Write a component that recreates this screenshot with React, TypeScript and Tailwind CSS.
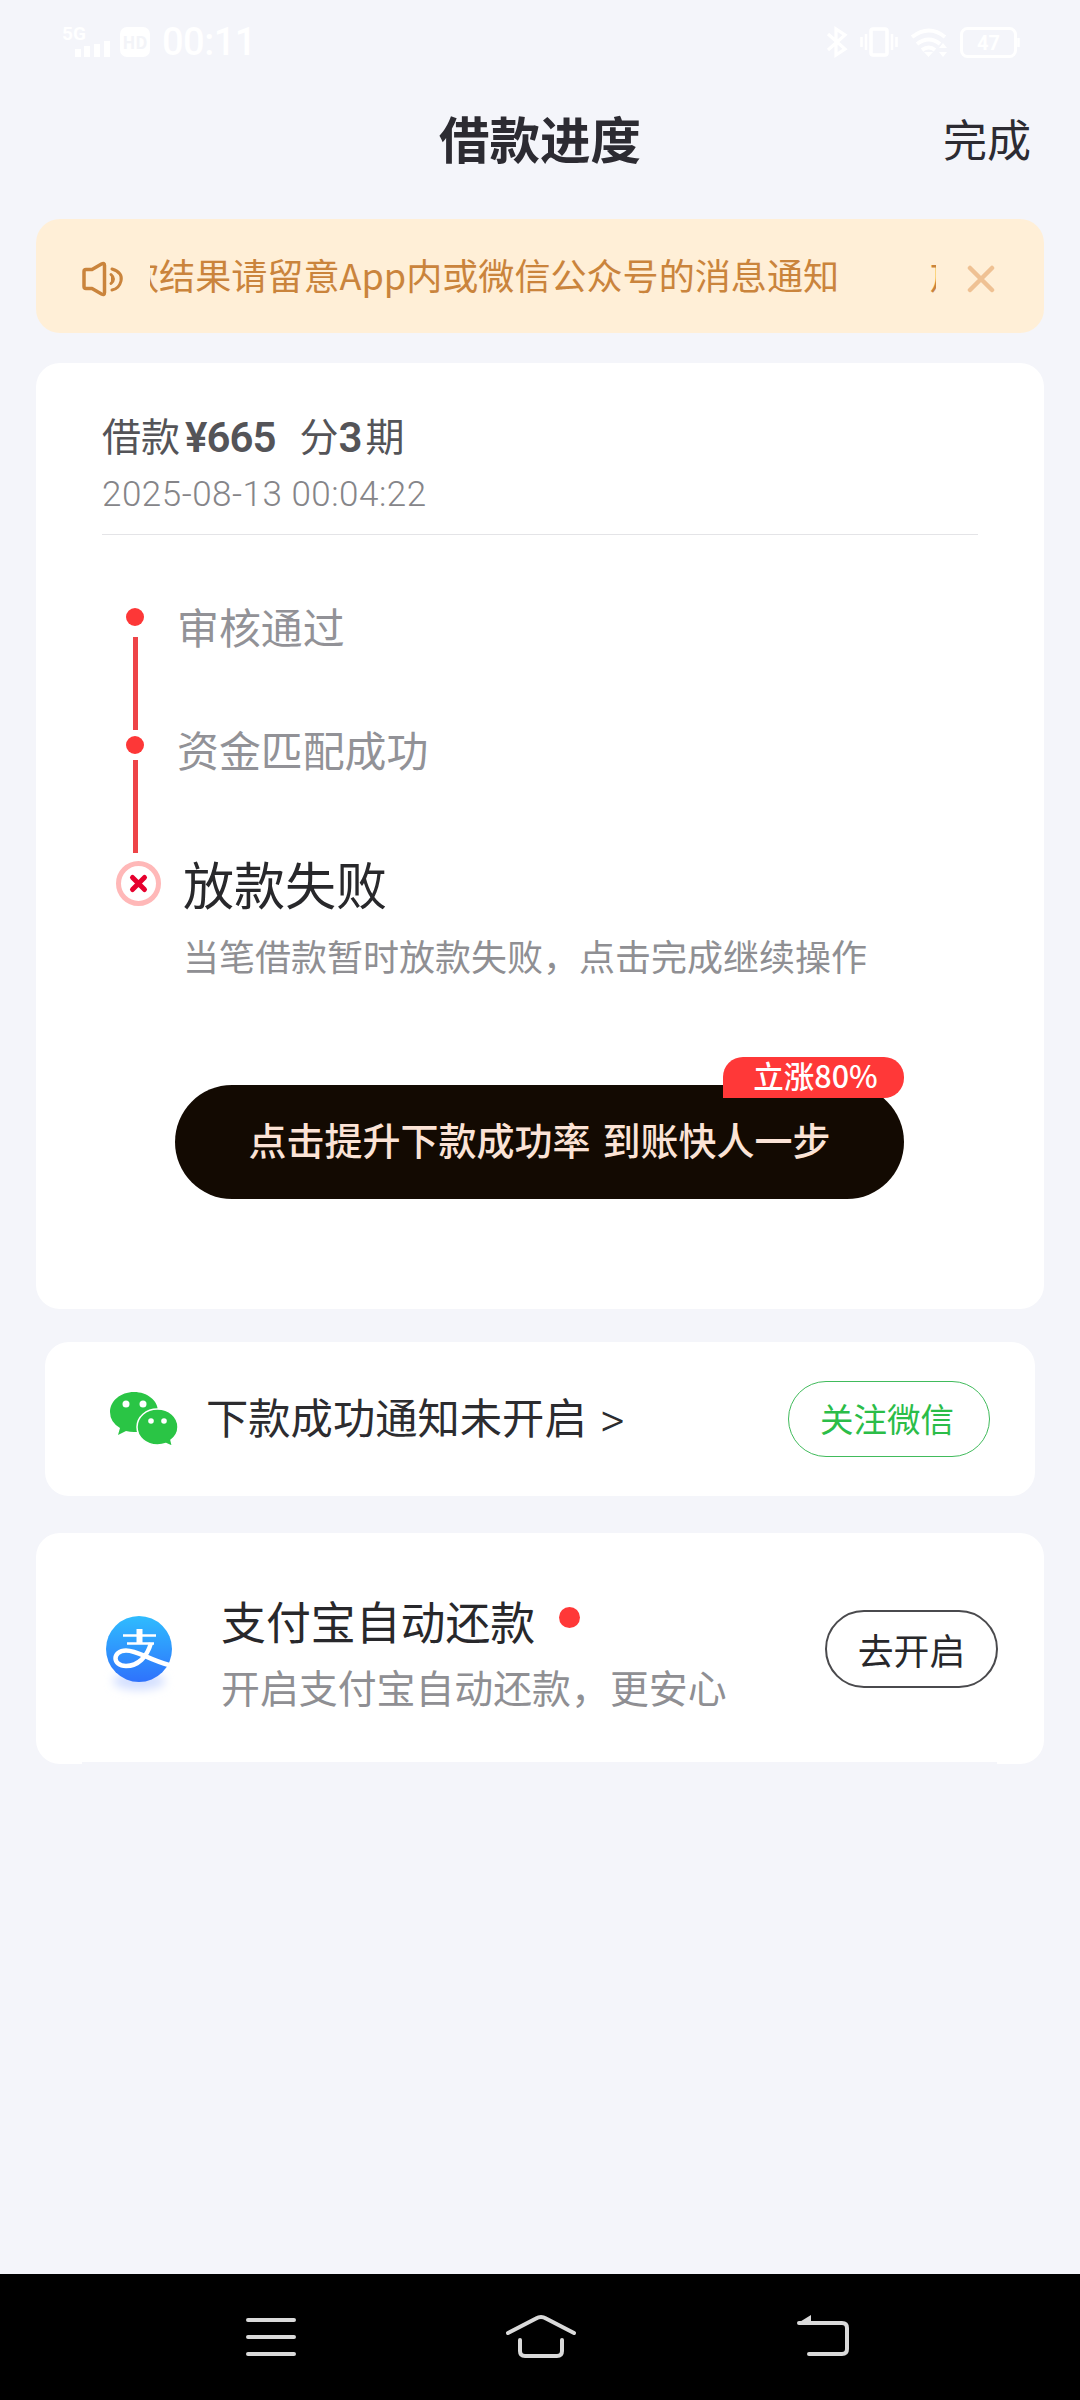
import React from "react";

const steps = [
  { title: "审核通过", dot: "h-[18px] w-[18px] shrink-0 rounded-full bg-[#fd3737] mt-[11px] mb-[11px]" },
  { title: "资金匹配成功", dot: "h-[18px] w-[18px] shrink-0 rounded-full bg-[#fd3737] mt-[16px] mb-[6px]" },
];

const StatusBar = () => (
  <div className="flex h-[84px] items-center justify-between pl-[61px] pr-[60px] text-white">
    <div className="flex items-center">
      <svg width="52" height="36" viewBox="0 0 52 36" fill="currentColor" className="overflow-visible">
        <text x="1" y="16" fontSize="19" fontWeight="700" fontFamily="Roboto">
          5G
        </text>
        <rect x="14" y="25" width="6" height="8" />
        <rect x="23" y="22" width="6" height="11" />
        <rect x="33" y="20" width="6" height="13" />
        <rect x="43" y="17" width="6" height="16" />
      </svg>
      <div className="ml-[7px] flex h-[30px] w-[30px] items-center justify-center rounded-[7px] bg-white text-[17px] font-bold text-[#f3f4f8]">
        HD
      </div>
      <span className="ml-[12px] font-['Roboto'] text-[38px] leading-none font-medium tracking-[-0.5px]">
        00:11
      </span>
    </div>
    <svg width="194" height="32" viewBox="0 0 194 32" fill="none" stroke="currentColor">
      <path d="M2 8l17 15-9 6V3l9 6L2 24" strokeWidth="3.2" />
      <rect x="45" y="3" width="16" height="26" rx="2" strokeWidth="3.5" />
      <path d="M40 8v16M66 8v16M35.500 11v10M70.500 11v10" strokeWidth="2.500" />
      <path d="M86 11q17-13 33 0M91 18q12-9 23 0M96 24q7-5 13 0" strokeWidth="4" />
      <path d="M98 26h9l-4.500 5zM113 22l4-5 4 5zM113 26h8l-4 5z" fill="currentColor" stroke="none" />
      <rect x="135.500" y="2.500" width="54" height="28" rx="6" strokeWidth="3" />
      <path d="M192.500 12v9" strokeWidth="2.500" />
      <text x="151" y="24" fontSize="20" fontWeight="700" fontFamily="Roboto" fill="currentColor" stroke="none">
        47
      </text>
    </svg>
  </div>
);

const Header = () => (
  <div className="grid h-[116px] grid-cols-3 items-center px-[49px] pb-[9px] text-[#2c2b32]">
    <span />
    <h1 className="text-center text-[50.500px] leading-none font-bold">
      借款进度
    </h1>
    <span className="text-right text-[44px] leading-none">完成</span>
  </div>
);

const Notice = () => (
  <div className="mx-9 mt-[19px] flex h-[114px] items-center rounded-3xl bg-[#ffefd7] pl-[45px] text-[#ca843c]">
    <svg width="44" height="36" viewBox="0 0 44 36" className="mt-[5px] shrink-0" fill="none" stroke="currentColor" strokeWidth="3.500" strokeLinecap="round" strokeLinejoin="round">
      <path d="M3 10.500q0-2 2-2h6L20.500 3q3-1.500 3 1.500v27q0 3-3 1.500L11 27.500H5q-2 0-2-2z" />
      <path d="M30 13.500q5 4.500 0 9" fill="currentColor" strokeWidth="3" />
      <path d="M31 8q11 3.500 9 12-2 8-9 9" strokeWidth="3" />
    </svg>
    <div className="ml-[25px] w-[786px] overflow-hidden">
      <div className="-ml-[27px] flex w-max pb-[5px] text-[36.100px] leading-[50px] whitespace-nowrap">
        <span>款结果请留意App内或微信公众号的消息通知</span>
        <span className="ml-[91px]">放款结果</span>
      </div>
    </div>
    <svg width="28" height="28" viewBox="0 0 28 28" className="mt-[6px] ml-[31px]" stroke="#efc193" strokeWidth="4.500" strokeLinecap="round">
      <path d="M3 3l22 22M25 3L3 25" />
    </svg>
  </div>
);

const Progress = () => (
  <div className="mx-9 mt-[30px] h-[946px] rounded-3xl bg-white px-[66px]">
    <div className="flex h-[101px] items-center pt-[40px] text-[39px] leading-[58px] text-[#545458]">
      <span>借款</span>
      <span className="ml-[5px] pt-[9px] font-['Roboto'] text-[42px] font-semibold tracking-[-1px]">
        ¥665
      </span>
      <span className="ml-[24px]">分</span>
      <span className="pt-[9px] font-['Roboto'] text-[42px] font-semibold tracking-[-1px]">
        3
      </span>
      <span className="ml-[4px]">期</span>
    </div>
    <p className="h-[71px] border-b border-[#e4e4e7] pt-[2px] font-['Roboto'] text-[35px] leading-[58px] font-light tracking-[0.500px] text-[#858589]">
      2025-08-13 00:04:22
    </p>

    <div className="mt-[62px]">
      {steps.map((step) => (
        <div key={step.title} className="flex h-[123px]">
          <div className="flex w-[66px] shrink-0 flex-col items-center">
            <span className={step.dot} />
            <span className="h-[93px] w-[5px] shrink-0 bg-[#ee4448]" />
          </div>
          <span className="ml-[9px] text-[41.900px] leading-[58px] text-[#929297]">
            {step.title}
          </span>
        </div>
      ))}
      <div className="flex">
        <svg width="45" height="45" viewBox="0 0 45 45" className="mt-[18px] ml-[14px]" fill="none" strokeLinecap="round">
          <circle cx="22.500" cy="22.500" r="20" stroke="#ffb8b8" strokeWidth="5" />
          <path d="M16.500 16.500l12 12M28.500 16.500l-12 12" stroke="#e6002d" strokeWidth="5" />
        </svg>
        <div className="ml-[22px]">
          <h2 className="text-[51px] leading-[80px] text-[#28282b]">放款失败</h2>
          <p className="pt-[4px] text-[36px] leading-[56px] text-[#8f8f93]">
            当笔借款暂时放款失败，点击完成继续操作
          </p>
        </div>
      </div>
    </div>

    <div className="relative mt-[102px] ml-[73px] flex h-[114px] w-[729px] items-center justify-center rounded-full bg-[#130a02] pb-[7px] text-[38px] font-medium whitespace-pre text-[#fbe3d6]">
      点击提升下款成功率<span className="ml-[12px]">到账快人一步</span>
      <span className="absolute -top-[28px] right-0 flex h-[41px] w-[181px] items-center justify-center rounded-[20px] rounded-bl-none bg-[#ff3838] pb-[3px] pl-[4px] text-[30.500px] font-medium text-white">
        立涨80%
      </span>
    </div>
  </div>
);

const WechatIcon = () => (
  <svg width="68" height="55" viewBox="0 0 68 55" fill="#2ac545">
    <path d="M24 0C37.500 0 48 8.500 48 19.500S37.500 40 24 40q-4 0-8-1l-8 4 2-7Q0 30 0 20C0 9 10.500 0 24 0z" />
    <path d="M47.500 17C59 17 68 24.500 68 35q0 8-7 13l1.500 6.500-6.500-3q-4 1.500-8.500 1.500C36 53 27 45 27 35S36 17 47.500 17z" stroke="#fff" strokeWidth="1.500" />
    <g fill="#fff">
      <circle cx="16" cy="12" r="3.500" />
      <circle cx="33" cy="12" r="3.500" />
      <circle cx="41" cy="29" r="2.800" />
      <circle cx="54" cy="29" r="2.800" />
    </g>
  </svg>
);

const AlipayIcon = () => (
  <svg width="66" height="66" viewBox="0 0 66 66" className="mt-[1px] overflow-visible">
    <defs>
      <linearGradient id="alipay" x1="0" y1="0" x2="0" y2="1">
        <stop offset="0" stopColor="#2fbcfe" />
        <stop offset="1" stopColor="#2f72fc" />
      </linearGradient>
      <filter id="soft" x="-30%" y="-80%" width="160%" height="260%">
        <feGaussianBlur stdDeviation="5" />
      </filter>
    </defs>
    <ellipse cx="33" cy="65" rx="26" ry="9" fill="#d3dfff" filter="url(#soft)" />
    <circle cx="33" cy="33" r="33" fill="url(#alipay)" />
    <g fill="none" stroke="#fff">
      <path d="M17 19.500h33M21 27.500h27" strokeWidth="2.500" />
      <path d="M33.500 13v14" strokeWidth="6" />
      <path d="M45 27C41 41 32 50 20 50 6 50 6 34.500 20 34.500c12 0 22 9 43 14.500" strokeWidth="4.500" />
    </g>
  </svg>
);

const WechatCard = () => (
  <div className="mx-[45px] mt-[33px] flex h-[154px] items-center rounded-3xl bg-white pr-[45px] pl-[65px]">
    <WechatIcon />
    <span className="ml-[28px] pb-[5px] text-[42.300px] leading-none text-[#2c2c2f]">
      下款成功通知未开启
    </span>
    <span className="ml-[13px] pt-[4px] font-['Roboto'] text-[48px] leading-none font-light text-[#2c2c2f]">
      &gt;
    </span>
    <button className="ml-auto h-[76px] w-[202px] rounded-full border border-[#41bb5c] pr-[4px] pb-[2px] text-[33.500px] text-[#2bbd48]">
      关注微信
    </button>
  </div>
);

const AlipayCard = () => (
  <div className="relative mx-9 mt-[37px] flex h-[231px] items-center rounded-3xl bg-white pr-[46px] pl-[70px]">
    <AlipayIcon />
    <div className="ml-[49px] pt-[10px]">
      <div className="flex items-start text-[44.900px] leading-[66px] text-[#28282b]">
        支付宝自动还款
        <span className="mt-[19px] ml-[24px] h-[21px] w-[21px] rounded-full bg-[#ff3838]" />
      </div>
      <p className="text-[38.900px] leading-[65px] text-[#8f8f93]">
        开启支付宝自动还款，更安心
      </p>
    </div>
    <button className="ml-auto h-[78px] w-[173px] rounded-full border-2 border-[#4a4a4d] pt-[3px] text-[35.800px] text-[#28282b]">
      去开启
    </button>
    <span className="absolute right-[47px] bottom-0 left-[46px] h-[2px] bg-[#f4f5fa]" />
  </div>
);

const NavBar = () => (
  <div className="mt-auto flex h-[126px] items-start bg-black pt-[40px] pl-[245px]">
    <svg width="52" height="46" viewBox="0 0 52 46" stroke="#dadada" strokeWidth="4" strokeLinecap="round">
      <path d="M3 6h46M3 23h46M3 40h46" />
    </svg>
    <svg width="72" height="46" viewBox="0 0 72 46" className="ml-[208px]" fill="none" stroke="#dadada" strokeWidth="4" strokeLinecap="round">
      <path d="M3 19L31 4.500q5-3 10 0L69 19M15 26v11q0 5 5 5h32q5 0 5-5V26" />
    </svg>
    <svg width="54" height="46" viewBox="0 0 54 46" className="ml-[219px]" fill="none" stroke="#dadada" strokeWidth="4" strokeLinecap="round">
      <path d="M3 9h43q5 0 5 5v21q0 5-5 5H13" />
      <path d="M2 9L15 1v8z" fill="#dadada" stroke="none" />
    </svg>
  </div>
);

const App = () => {
  return (
    <div className="flex h-[2400px] w-[1080px] flex-col overflow-hidden bg-[#f4f5fa] font-['Noto_Sans_CJK_SC',sans-serif]">
      <StatusBar />
      <Header />
      <Notice />
      <Progress />
      <WechatCard />
      <AlipayCard />
      <NavBar />
    </div>
  );
};

export default App;
